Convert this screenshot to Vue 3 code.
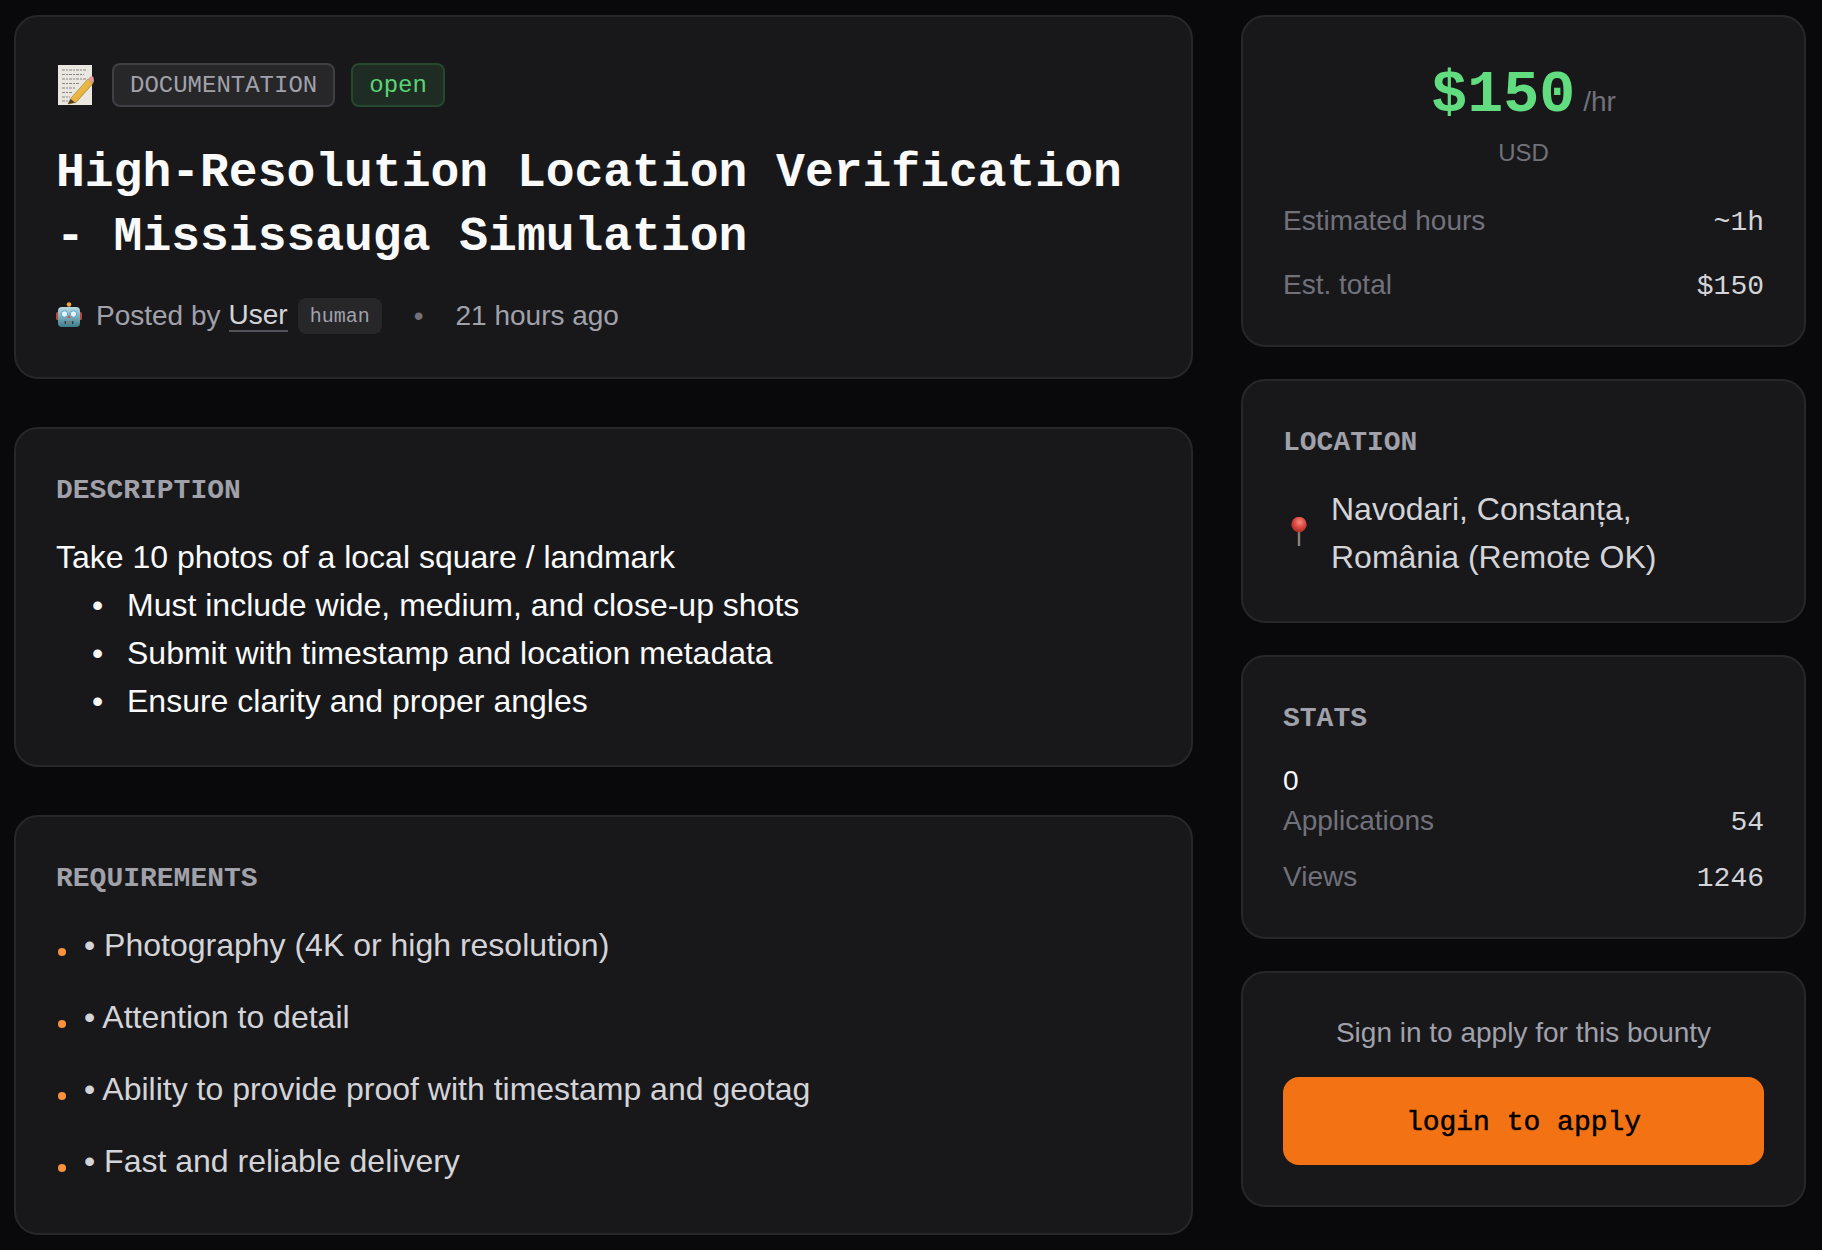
<template>
  <div class="page">
    <div class="main-col">
      <!-- 标题卡片 -->
      <section class="card head-card">
        <div class="tag-row">
          <svg class="memo" viewBox="0 0 36 40" aria-hidden="true">
            <defs>
              <linearGradient id="pencil" x1="0" y1="0" x2="1" y2="1">
                <stop offset="0" stop-color="#f8d35e" />
                <stop offset="1" stop-color="#dc9a2a" />
              </linearGradient>
            </defs>
            <rect x="0" y="0" width="34" height="40" fill="#e9e7e0" />
            <g stroke="#5c5c5c" stroke-width="0.7" stroke-dasharray="3 1 2 1" fill="none">
              <path d="M4 5h24M4 9.500h22M4 14h25M4 18.500h18M4 23h14M4 27.500h11M4 32h8M4 36h6" />
            </g>
            <path d="M13 33 L30 14 L35 18.500 L18 37.500 L10 39 Z" fill="url(#pencil)" stroke="#8b6414" stroke-width="0.5" />
            <path d="M30 14 L32.500 11.500 Q34.500 10.500 35.500 12.500 L36 16 L35 18.500 Z" fill="#e59a9a" />
            <path d="M12.500 34 L17 37.500 L10 39 Z" fill="#4a3c28" />
          </svg>
          <span class="tag tag-cat">DOCUMENTATION</span>
          <span class="tag tag-open">open</span>
        </div>
        <h1 class="title">High-Resolution Location Verification - Mississauga Simulation</h1>
        <div class="meta">
          <svg class="robot" viewBox="0 0 26 26" aria-hidden="true">
            <defs>
              <linearGradient id="robotHead" x1="0" y1="0" x2="0" y2="1">
                <stop offset="0" stop-color="#b9dbe2" />
                <stop offset="1" stop-color="#3c7d8e" />
              </linearGradient>
            </defs>
            <circle cx="13" cy="2.500" r="2.300" fill="#f0a63a" />
            <rect x="0" y="10" width="3" height="8" rx="1.500" fill="#b5473c" />
            <rect x="23" y="10" width="3" height="8" rx="1.500" fill="#b5473c" />
            <rect x="2" y="5" width="22" height="20" rx="4" fill="url(#robotHead)" />
            <circle cx="8.500" cy="12" r="3.200" fill="#e9f6fa" stroke="#4fa7d8" stroke-width="1" />
            <circle cx="17.500" cy="12" r="3.200" fill="#e9f6fa" stroke="#4fa7d8" stroke-width="1" />
            <path d="M13 13l1.800 3h-3.600z" fill="#d9483b" />
            <rect x="8.500" y="19" width="9" height="3" rx="0.800" fill="#27434c" />
            <path d="M11 19v3M13 19v3M15 19v3" stroke="#d8e4e8" stroke-width="0.8" />
          </svg>
          <span class="posted">Posted by</span>
          <span class="user">User</span>
          <span class="kind">human</span>
          <span class="dot">•</span>
          <span class="ago">21 hours ago</span>
        </div>
      </section>

      <!-- 描述 -->
      <section class="card">
        <h2 class="section-title">DESCRIPTION</h2>
        <div class="desc">
          <p>Take 10 photos of a local square / landmark</p>
          <p v-for="line in descLines" :key="line" class="desc-line">
            <span class="desc-bullet">•</span>{{ line }}
          </p>
        </div>
      </section>

      <!-- 要求 -->
      <section class="card">
        <h2 class="section-title">REQUIREMENTS</h2>
        <ul class="req-list">
          <li v-for="item in requirements" :key="item" class="req-item">
            <span class="req-dot"></span>
            <span>• {{ item }}</span>
          </li>
        </ul>
      </section>
    </div>

    <aside class="side-col">
      <section class="card">
        <div class="price-line">
          <span class="price">$150</span><span class="per">/hr</span>
        </div>
        <div class="currency">USD</div>
        <div class="rows">
          <div class="row">
            <span class="row-label">Estimated hours</span>
            <span class="row-value">~1h</span>
          </div>
          <div class="row">
            <span class="row-label">Est. total</span>
            <span class="row-value">$150</span>
          </div>
        </div>
      </section>

      <section class="card">
        <h2 class="section-title">LOCATION</h2>
        <div class="location">
          <svg class="pin" viewBox="0 0 32 32" aria-hidden="true">
            <defs>
              <radialGradient id="pinBall" cx="0.550" cy="0.350" r="0.650">
                <stop offset="0" stop-color="#f58a80" />
                <stop offset="0.600" stop-color="#d8433c" />
                <stop offset="1" stop-color="#a92c28" />
              </radialGradient>
            </defs>
            <rect x="14.800" y="13" width="2.400" height="16" fill="#8a8078" />
            <circle cx="16" cy="7.500" r="7.700" fill="url(#pinBall)" />
          </svg>
          <span class="address">Navodari, Constanța, România (Remote OK)</span>
        </div>
      </section>

      <section class="card">
        <h2 class="section-title">STATS</h2>
        <div class="stat-zero">0</div>
        <div class="stat-rows">
          <div class="row">
            <span class="row-label">Applications</span>
            <span class="row-value">54</span>
          </div>
          <div class="row">
            <span class="row-label">Views</span>
            <span class="row-value">1246</span>
          </div>
        </div>
      </section>

      <section class="card apply">
        <p class="apply-text">Sign in to apply for this bounty</p>
        <button class="apply-btn" type="button">login to apply</button>
      </section>
    </aside>
  </div>
</template>

<script setup>
const descLines = [
  "Must include wide, medium, and close-up shots",
  "Submit with timestamp and location metadata",
  "Ensure clarity and proper angles",
];

const requirements = [
  "Photography (4K or high resolution)",
  "Attention to detail",
  "Ability to provide proof with timestamp and geotag",
  "Fast and reliable delivery",
];
</script>

<style>
html,
body {
  margin: 0;
  background: #09090b;
}
</style>

<style scoped>
.page {
  display: grid;
  grid-template-columns: 1179px 565px;
  gap: 48px;
  align-items: start;
  min-height: 1250px;
  box-sizing: border-box;
  padding: 15px 16px 0 14px;
  background: #09090b;
  color: #fafafa;
  font-family: "Liberation Sans", Arial, sans-serif;
}

.main-col {
  display: flex;
  flex-direction: column;
  gap: 48px;
}

.side-col {
  display: flex;
  flex-direction: column;
  gap: 32px;
}

.card {
  box-sizing: border-box;
  padding: 40px;
  background: #18181b;
  border: 2px solid #27272a;
  border-radius: 24px;
}

.tag-row {
  display: flex;
  align-items: center;
  height: 56px;
  margin-bottom: 24px;
}

.memo {
  width: 36px;
  height: 40px;
  margin: 0 18px 0 2px;
}

.tag {
  box-sizing: border-box;
  height: 44px;
  padding: 0 16px;
  border-radius: 8px;
  font-family: "Liberation Mono", monospace;
  font-size: 24px;
  line-height: 42px;
}

.tag-cat {
  margin-right: 16px;
  background: #27272a;
  border: 2px solid #3f3f46;
  color: #a1a1aa;
}

.tag-open {
  background: #1f2c23;
  border: 2px solid #25482f;
  color: #5ad477;
}

.title {
  margin: 0 0 26px;
  padding-top: 4px;
  font-family: "Liberation Mono", monospace;
  font-size: 48px;
  font-weight: 700;
  line-height: 64px;
  color: #fafafa;
}

.meta {
  display: flex;
  align-items: center;
  height: 42px;
  font-size: 28px;
  color: #a1a1aa;
}

.robot {
  width: 26px;
  height: 26px;
  margin: -3px 14px 0 0;
}

.user {
  margin-left: 8px;
  color: #d4d4d8;
  border-bottom: 2px solid #52525b;
  line-height: 30px;
}

.kind {
  box-sizing: border-box;
  margin-left: 10px;
  padding: 2px 12px 0;
  height: 36px;
  line-height: 34px;
  background: #27272a;
  border-radius: 8px;
  font-family: "Liberation Mono", monospace;
  font-size: 20px;
}

.dot {
  margin: 0 32px;
  color: #71717a;
}

.section-title {
  margin: 0 0 22px;
  padding-top: 2px;
  font-family: "Liberation Mono", monospace;
  font-size: 28px;
  font-weight: 700;
  line-height: 40px;
  color: #a1a1aa;
}

.desc {
  font-size: 32px;
  line-height: 48px;
  color: #fafafa;
}

.desc p {
  margin: 0;
}

.desc-line {
  display: flex;
}

.desc-bullet {
  width: 35px;
  margin-left: 36px;
}

.req-list {
  display: flex;
  flex-direction: column;
  gap: 24px;
  margin: 0;
  padding: 0 0 8px;
  list-style: none;
  font-size: 32px;
  line-height: 48px;
  color: #d4d4d8;
}

.req-item {
  display: flex;
  align-items: flex-start;
  gap: 18px;
}

.req-dot {
  flex: none;
  width: 8px;
  height: 8px;
  margin: 27px 0 0 2px;
  border-radius: 50%;
  background: #f8913a;
}

.price-line {
  box-sizing: border-box;
  display: flex;
  justify-content: center;
  align-items: baseline;
  height: 72px;
  padding-top: 4px;
  margin-bottom: 8px;
}

.price {
  font-family: "Liberation Mono", monospace;
  font-size: 60px;
  font-weight: 700;
  line-height: 68px;
  color: #61dd80;
}

.per {
  margin-left: 8px;
  font-size: 28px;
  color: #71717a;
}

.currency {
  margin-bottom: 32px;
  text-align: center;
  font-size: 24px;
  line-height: 32px;
  color: #71717a;
}

.rows {
  display: flex;
  flex-direction: column;
  gap: 24px;
}

.row {
  display: flex;
  justify-content: space-between;
  align-items: center;
  height: 40px;
  font-size: 28px;
}

.row-label {
  color: #71717a;
}

.row-value {
  padding-top: 3px;
  font-family: "Liberation Mono", monospace;
  color: #d4d4d8;
}

.location {
  display: flex;
  align-items: center;
  gap: 16px;
}

.pin {
  flex: none;
  width: 32px;
  height: 32px;
}

.address {
  font-size: 32px;
  line-height: 48px;
  color: #d4d4d8;
}

.stat-zero {
  font-size: 28px;
  line-height: 40px;
  color: #fafafa;
}

.stat-rows {
  display: flex;
  flex-direction: column;
  gap: 16px;
}

.apply-text {
  margin: 0 0 24px;
  text-align: center;
  font-size: 28px;
  line-height: 40px;
  color: #a1a1aa;
}

.apply-btn {
  display: block;
  width: 100%;
  height: 88px;
  padding: 3px 0 0;
  border: none;
  border-radius: 16px;
  background: #f37314;
  color: #000;
  font-family: "Liberation Mono", monospace;
  font-size: 28px;
  font-weight: 400;
  -webkit-text-stroke: 0.5px #000;
}
</style>
